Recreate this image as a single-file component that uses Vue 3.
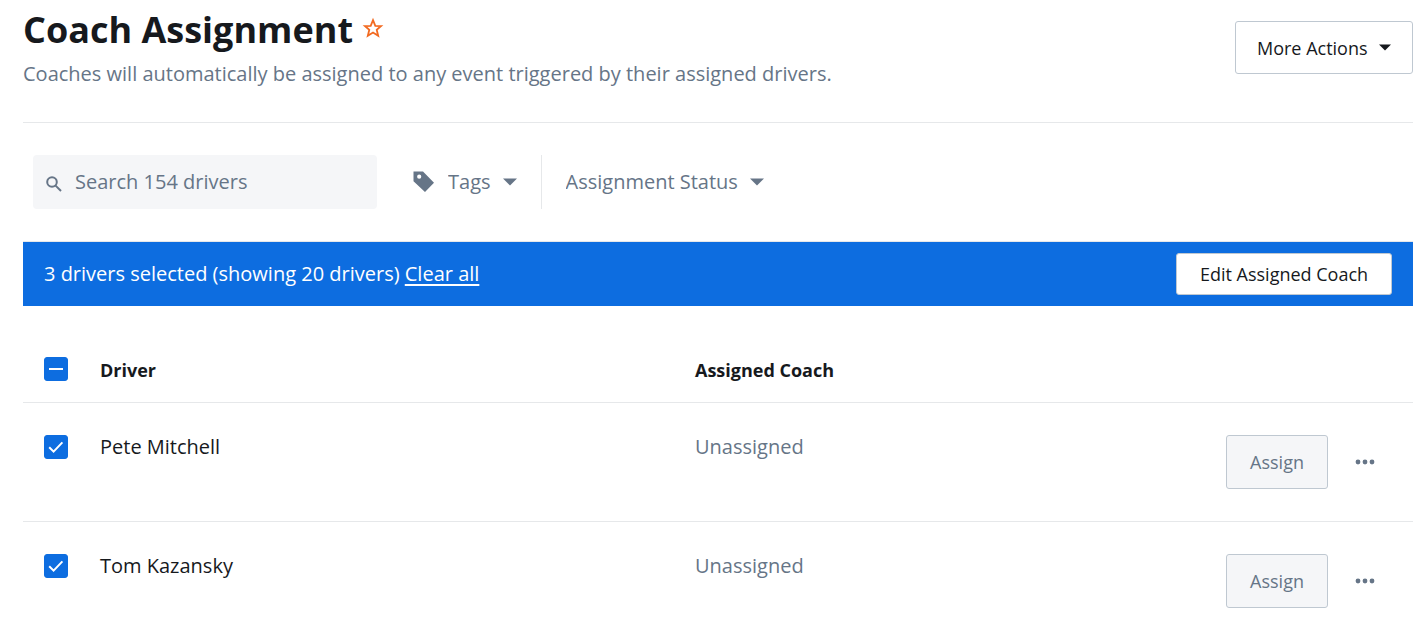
<script setup>
import { computed, ref } from 'vue'

const total = 154
const search = ref('')
const tag = ref('')
const status = ref('')
const drivers = ref([
  { id: 1, name: 'Pete Mitchell', coach: 'Unassigned', selected: true },
  { id: 2, name: 'Tom Kazansky', coach: 'Unassigned', selected: true },
])
const selectedElsewhere = ref(1)
const selectedCount = computed(
  () => drivers.value.filter((d) => d.selected).length + selectedElsewhere.value
)

function clearAll() {
  drivers.value.forEach((d) => (d.selected = false))
  selectedElsewhere.value = 0
}

function toggleAll() {
  const next = selectedCount.value === 0
  drivers.value.forEach((d) => (d.selected = next))
  selectedElsewhere.value = next ? 1 : 0
}
</script>

<template>
  <main class="page">
    <header class="head">
      <div class="intro">
        <div class="title-row">
          <h1>Coach Assignment</h1>
          <button class="star" type="button" aria-label="Add to favorites">
            <svg width="22" height="22" viewBox="0 0 22 22" aria-hidden="true">
              <path d="M11 3.2 13.3 8.9 19 9 14.7 12.7 16.2 18.8 11 15.6 5.8 18.8 7.3 12.7 3 9 8.7 8.9Z" />
            </svg>
          </button>
        </div>
        <p>Coaches will automatically be assigned to any event triggered by their assigned drivers.</p>
      </div>
      <button class="btn more" type="button" aria-haspopup="menu">
        More Actions
        <svg width="12" height="7" viewBox="0 0 12 7" aria-hidden="true"><path d="M0 0.5H12L6 6.5Z" /></svg>
      </button>
    </header>

    <section class="filters" aria-label="Filters">
      <label class="search">
        <svg width="18" height="18" viewBox="0 0 18 18" aria-hidden="true">
          <circle cx="7" cy="7" r="4.8" />
          <path d="M10.6 10.6 16 16" />
        </svg>
        <input v-model="search" type="search" :placeholder="`Search ${total} drivers`" :aria-label="`Search ${total} drivers`" />
      </label>
      <div class="filter tags">
        <svg class="tag" width="22" height="22" viewBox="0 0 22 22" aria-hidden="true">
          <path fill-rule="evenodd" d="M.5 .5H10L21 11.8 12 21 .5 10.2ZM6.2 3.6A2.1 2.1 0 1 0 6.2 7.8 2.1 2.1 0 0 0 6.2 3.6Z" />
        </svg>
        <span class="drop">
          <select v-model="tag" aria-label="Tags"><option value="">Tags</option></select>
          <svg class="caret" width="14" height="8" viewBox="0 0 14 8" aria-hidden="true"><path d="M0 .5H14L7 7.5Z" /></svg>
        </span>
      </div>
      <div class="filter">
        <span class="drop">
          <select v-model="status" aria-label="Assignment Status"><option value="">Assignment Status</option></select>
          <svg class="caret" width="14" height="8" viewBox="0 0 14 8" aria-hidden="true"><path d="M0 .5H14L7 7.5Z" /></svg>
        </span>
      </div>
    </section>

    <section class="banner" aria-label="Selection">
      <span>{{ selectedCount }} drivers selected (showing 20 drivers) <a href="#" @click.prevent="clearAll">Clear all</a></span>
      <button class="btn edit" type="button">Edit Assigned Coach</button>
    </section>

    <table>
      <thead>
        <tr>
          <th class="pick" scope="col">
            <span class="check">
              <input type="checkbox" aria-label="Select all drivers" :checked="selectedCount > 0" @change="toggleAll" />
              <svg width="24" height="24" viewBox="0 0 24 24" aria-hidden="true"><path d="M5 12H19" /></svg>
            </span>
          </th>
          <th class="driver" scope="col">Driver</th>
          <th scope="col">Assigned Coach</th>
          <th class="actions" scope="col" aria-label="Actions"></th>
        </tr>
      </thead>
      <tbody>
        <tr v-for="d in drivers" :key="d.id">
          <td>
            <span class="check">
              <input v-model="d.selected" type="checkbox" :aria-label="`Select ${d.name}`" />
              <svg width="24" height="24" viewBox="0 0 24 24" aria-hidden="true"><path d="M5.2 12.2 9.6 16.6 18.4 7.4" /></svg>
            </span>
          </td>
          <td>{{ d.name }}</td>
          <td class="muted">{{ d.coach }}</td>
          <td>
            <div class="row-actions">
              <button class="btn assign" type="button">Assign</button>
              <button class="dots" type="button" :aria-label="`More options for ${d.name}`">
                <svg width="20" height="6" viewBox="0 0 20 6" aria-hidden="true">
                  <circle cx="3" cy="3" r="2.4" /><circle cx="10" cy="3" r="2.4" /><circle cx="17" cy="3" r="2.4" />
                </svg>
              </button>
            </div>
          </td>
        </tr>
      </tbody>
    </table>
  </main>
</template>

<style>
html {
  scrollbar-width: none;
  background: #fff;
}
</style>

<style scoped>
.page {
  padding: 0 11px 0 23px;
  font-family: "Open Sans", "Noto Sans", sans-serif;
  font-size: 20px;
  line-height: 28px;
  color: #16191d;
}
button, input, select {
  font: inherit;
  color: inherit;
  margin: 0;
}
button {
  cursor: pointer;
}
svg {
  display: block;
  flex: none;
}
.head {
  display: flex;
  justify-content: space-between;
  align-items: flex-start;
  padding-bottom: 34px;
  border-bottom: 1px solid #e6e8ea;
}
.title-row {
  display: flex;
  align-items: center;
  gap: 9px;
  height: 60px;
}
h1 {
  margin: 0;
  font-size: 36px;
  line-height: 60px;
  font-weight: 700;
}
.star {
  padding: 0 0 4px;
  border: 0;
  background: none;
}
.star path {
  fill: none;
  stroke: #f26a21;
  stroke-width: 1.8;
}
.intro p {
  margin: 0;
  color: #667587;
}
.btn {
  box-sizing: border-box;
  border: 1px solid #bfc8d1;
  border-radius: 3px;
  padding: 0 21px;
  background: #fff;
  font-size: 18px;
  white-space: nowrap;
}
.more {
  display: flex;
  align-items: center;
  justify-content: space-between;
  gap: 11px;
  min-width: 178px;
  height: 53px;
  margin-top: 21px;
}
.more path {
  fill: #16191d;
}
.filters {
  display: flex;
  height: 54px;
  margin: 32px 0 32px 10px;
  color: #667587;
}
.search {
  box-sizing: border-box;
  display: flex;
  align-items: center;
  gap: 12px;
  width: 344px;
  padding: 0 12px;
  border-radius: 4px;
  background: #f5f6f8;
}
.search svg {
  margin-top: 4px;
  fill: none;
  stroke: #667587;
  stroke-width: 2;
}
.search input {
  flex: 1;
  min-width: 0;
  padding: 0;
  border: 0;
  outline: 0;
  background: none;
}
.search input::placeholder {
  color: #667587;
  opacity: 1;
}
.filter {
  display: flex;
  align-items: center;
  padding: 0 24px;
}
.tags {
  gap: 13px;
  padding-left: 36px;
  border-right: 1px solid #e6e8ea;
}
.tag, .caret {
  fill: #667587;
}
.drop {
  display: grid;
  align-items: center;
}
.drop > * {
  grid-area: 1 / 1;
}
.drop select {
  appearance: none;
  field-sizing: content;
  border: 0;
  padding: 0 26px 0 0;
  background: none;
}
.caret {
  justify-self: end;
  pointer-events: none;
}
.banner {
  display: flex;
  align-items: center;
  justify-content: space-between;
  height: 64px;
  padding: 0 21px;
  border-top: 1px solid #e6e8ea;
  background: #0d6de0;
  background-clip: padding-box;
  color: #fff;
}
.banner a {
  color: inherit;
  text-decoration: underline;
  text-decoration-thickness: 2px;
  text-underline-offset: 3px;
}
.edit {
  min-width: 216px;
  height: 42px;
  color: #16191d;
}
table {
  width: 100%;
  border-collapse: separate;
  border-spacing: 0;
  table-layout: fixed;
}
th, td {
  padding: 0;
  text-align: left;
  vertical-align: top;
  border-bottom: 1px solid #e6e8ea;
}
th {
  height: 46px;
  padding-top: 50px;
  font-size: 18px;
}
td {
  padding: 30px 0 32px;
}
.pick {
  width: 77px;
}
.driver {
  width: 595px;
}
.actions {
  width: 210px;
}
.muted {
  color: #667587;
}
.check {
  display: grid;
  width: 24px;
  height: 24px;
  margin: 2px 0 0 21px;
}
th .check {
  margin-top: 1px;
}
.check > * {
  grid-area: 1 / 1;
}
.check input {
  appearance: none;
  width: 24px;
  height: 24px;
  border: 1px solid #bfc8d1;
  border-radius: 3px;
  background: #fff;
}
.check input:checked {
  border-color: #0d6de0;
  background: #0d6de0;
}
.check svg {
  pointer-events: none;
  fill: none;
  stroke: #fff;
  stroke-width: 2;
}
.row-actions {
  display: flex;
  align-items: center;
  justify-content: flex-end;
  gap: 27px;
  padding: 2px 38px 0 0;
}
.assign {
  min-width: 102px;
  height: 54px;
  background: #f5f6f8;
  color: #667587;
}
.dots {
  padding: 0;
  border: 0;
  background: none;
}
.dots svg {
  fill: #667587;
}
</style>
